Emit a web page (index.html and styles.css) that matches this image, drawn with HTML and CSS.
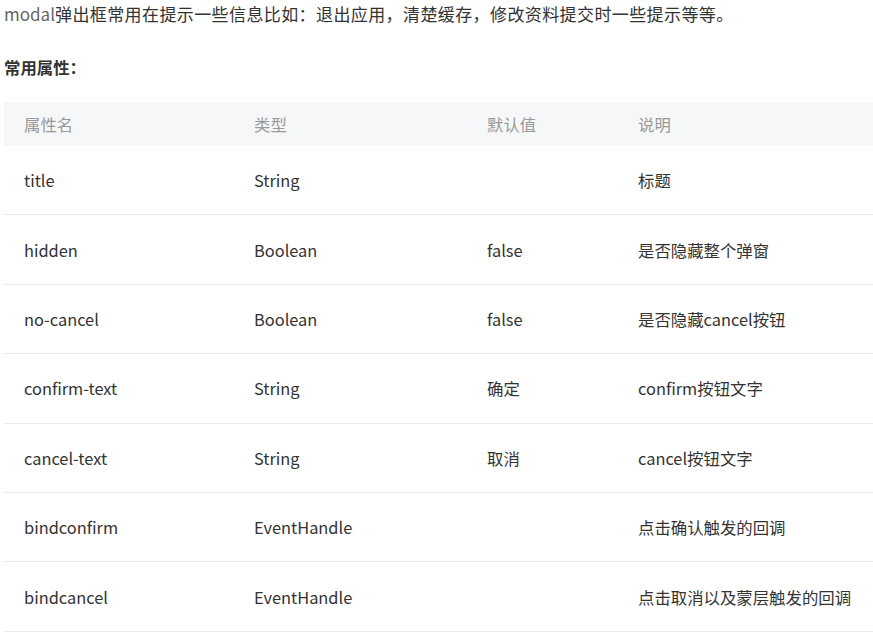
FILE: index.html
```html
<!DOCTYPE html>
<html lang="zh">
<head>
<meta charset="utf-8">
<link rel="stylesheet" href="styles.css">
</head>
<body>
<div class="page">
  <p class="intro"><span class="code">modal</span>弹出框常用在提示一些信息比如：退出应用，清楚缓存，修改资料提交时一些提示等等。</p>
  <p class="subhead">常用属性：</p>
  <table class="props">
    <colgroup>
      <col class="c1"><col class="c2"><col class="c3"><col class="c4">
    </colgroup>
    <thead>
      <tr><th>属性名</th><th>类型</th><th>默认值</th><th>说明</th></tr>
    </thead>
    <tbody>
      <tr><td>title</td><td>String</td><td></td><td>标题</td></tr>
      <tr><td>hidden</td><td>Boolean</td><td>false</td><td>是否隐藏整个弹窗</td></tr>
      <tr><td>no-cancel</td><td>Boolean</td><td>false</td><td>是否隐藏cancel按钮</td></tr>
      <tr><td>confirm-text</td><td>String</td><td>确定</td><td>confirm按钮文字</td></tr>
      <tr><td>cancel-text</td><td>String</td><td>取消</td><td>cancel按钮文字</td></tr>
      <tr><td>bindconfirm</td><td>EventHandle</td><td></td><td>点击确认触发的回调</td></tr>
      <tr><td>bindcancel</td><td>EventHandle</td><td></td><td>点击取消以及蒙层触发的回调</td></tr>
    </tbody>
  </table>
</div>
</body>
</html>
```

FILE: styles.css
```css
html, body {
  margin: 0;
  padding: 0;
  background: #fff;
}
.page {
  padding: 2px 0 0 4px;
  font-family: "Noto Sans CJK SC", "Noto Sans", sans-serif;
  color: #333;
}
.intro {
  margin: 0;
  font-size: 17px;
  line-height: 24px;
  letter-spacing: 0.4px;
  color: #333;
}
.code {
  color: #666;
  letter-spacing: 0;
}
.subhead {
  margin: 29px 0 0 0;
  font-size: 16.4px;
  line-height: 24px;
  font-weight: bold;
  color: #333;
}
.props {
  margin-top: 23px;
  width: 869px;
  border-collapse: collapse;
  table-layout: fixed;
  font-size: 16.4px;
}
.c1 { width: 230px; }
.c2 { width: 233px; }
.c3 { width: 151px; }
.c4 { width: 255px; }
.props th {
  background: #f6f7f8;
  color: #999;
  font-weight: normal;
  text-align: left;
  height: 44px;
  padding: 0 0 0 20px;
}
.props td {
  height: 68.4px;
  padding: 0 0 0 20px;
  border-bottom: 1px solid #ececec;
  color: #333;
  white-space: nowrap;
}
```
